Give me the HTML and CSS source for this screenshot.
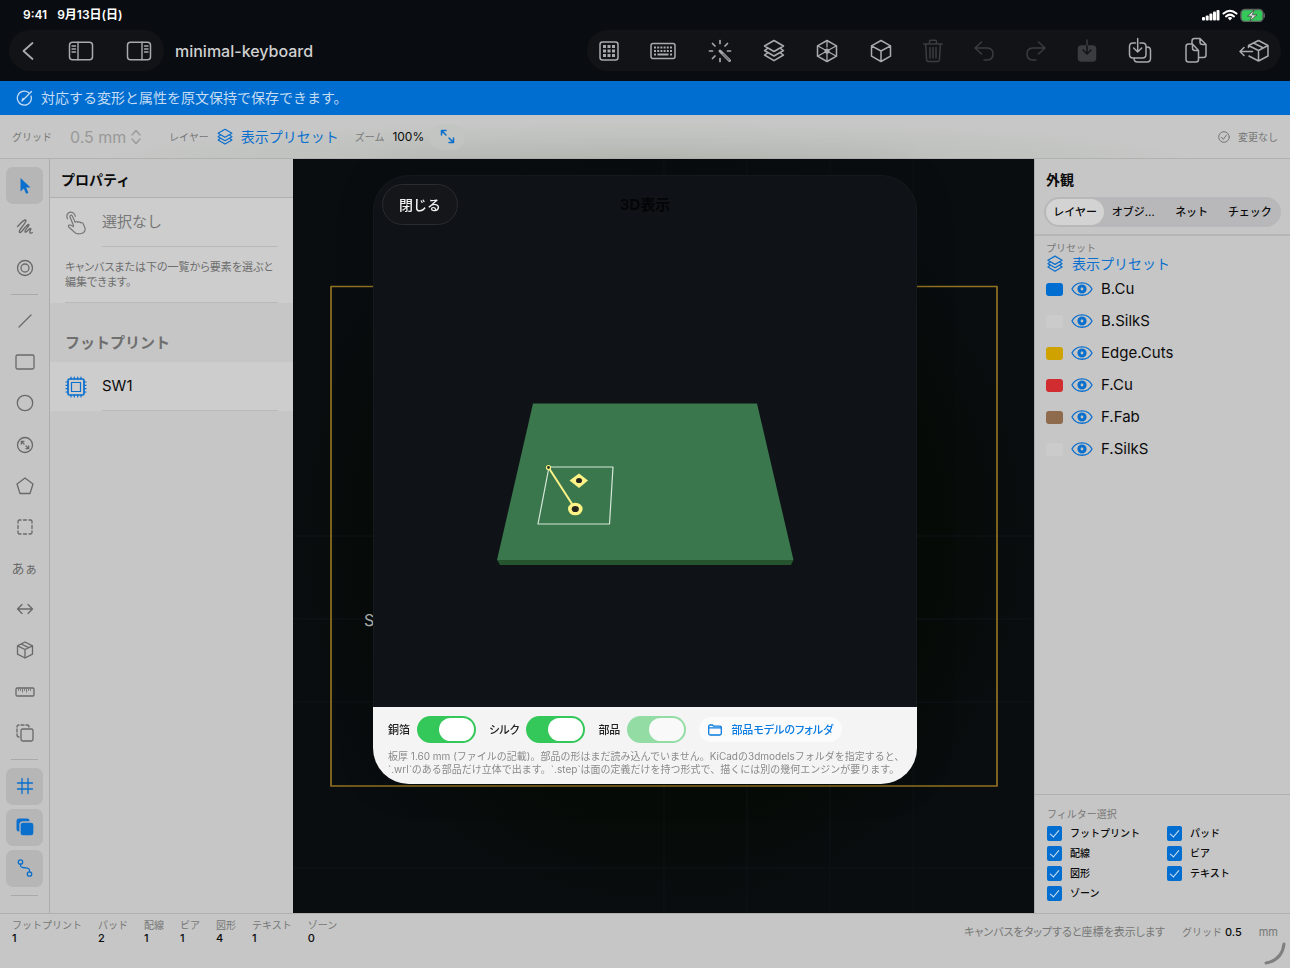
FILE: index.html
```html
<!DOCTYPE html>
<html lang="ja">
<head>
<meta charset="utf-8">
<meta name="viewport" content="width=device-width, initial-scale=1">
<title>minimal-keyboard</title>
<link rel="stylesheet" href="styles.css">
</head>
<body>
<svg class="defs" aria-hidden="true">
  <symbol id="layers" viewBox="0 0 22 24"><path d="M11 1.500 20.500 7 11 12.500 1.500 7ZM4.300 9.600 1.500 11.500 11 17l9.500-5.500-2.800-1.900M4.300 14.100 1.500 16 11 21.700 20.500 16l-2.800-1.900"/></symbol>
  <symbol id="eye" viewBox="0 0 22 16"><path d="M1 8C5-.3 17-.3 21 8 17 16.300 5 16.300 1 8Z"/><circle cx="11" cy="8" r="3" stroke-width="3.200"/></symbol>
</svg>

<header class="top">
  <div class="status">
    <span>9:41</span><span>9月13日(日)</span>
    <svg class="status-icons" width="64" height="14" viewBox="0 0 64 14" aria-hidden="true">
      <g fill="#fff"><rect x="1" y="9" width="3" height="3.500" rx="1"/><rect x="4.700" y="7.500" width="3" height="5" rx="1"/><rect x="8.400" y="5.500" width="3" height="7" rx="1"/><rect x="12" y="3.500" width="3" height="9" rx="1"/><rect x="15.500" y="2" width="3" height="10.500" rx="1"/></g>
      <g fill="none" stroke="#fff" stroke-width="2"><path d="M22.500 5.600q6.500-5.600 13 0M25 8.400q4-3.600 8 0"/></g><path d="M26.700 10q2.300-1.800 4.600 0L29 12.500Z" fill="#fff"/>
      <rect x="40" y="1.500" width="22" height="12" rx="4" fill="#34c759" stroke="#5d6460" stroke-width="1.500"/><path d="M63.500 6v3" stroke="#5d6460"/><path d="m53 2-6.500 6.200h4L49 13l7-6.200h-4.300Z" fill="#ddd" stroke="#3c4a40" stroke-width=".8"/>
    </svg>
  </div>
  <nav class="nav">
    <div class="pill pill-left">
      <button aria-label="戻る"><svg width="14" height="22" viewBox="0 0 14 22"><path d="m11.500 3-9 8 9 8" stroke-width="1.800"/></svg></button>
      <button aria-label="左パネル"><svg width="26" height="22" viewBox="0 0 26 22"><rect x="1.500" y="2.200" width="23" height="17.600" rx="3"/><path d="M10 2.200v17.600M4 6h3.500M4 9h3.500M4 12h3.500" stroke-width="1.400"/></svg></button>
      <button aria-label="右パネル"><svg width="26" height="22" viewBox="0 0 26 22"><rect x="1.500" y="2.200" width="23" height="17.600" rx="3"/><path d="M16 2.200v17.600M18.500 6H22M18.500 9H22M18.500 12H22" stroke-width="1.400"/></svg></button>
    </div>
    <h1>minimal-keyboard</h1>
    <div class="pill pill-right">
      <button aria-label="グリッド表"><svg width="20" height="20" viewBox="0 0 20 20"><rect x="1" y="1" width="18" height="18" rx="2.500"/><path d="M4 5.500h3m1.500 0h3m1.500 0h3M4 10h3m1.500 0h3m1.500 0h3M4 14.500h3m1.500 0h3m1.500 0h3" stroke-width="3" stroke-linecap="butt"/></svg></button>
      <button aria-label="キーボード"><svg width="26" height="18" viewBox="0 0 26 18"><rect x="1" y="1.500" width="24" height="15" rx="2"/><g stroke-linecap="butt"><path d="M4 5.500h18M4 9h18" stroke-width="2" stroke-dasharray="2 1.200"/><path d="M4 12.500h2m1.500 0h11m1.500 0h2" stroke-width="1.800"/></g></svg></button>
      <button aria-label="自動"><svg width="24" height="24" viewBox="0 0 24 24"><path d="M12 1.500v3M12 19.500v3M1.500 12h3M19.500 12h3M4.500 4.500l2.500 2.500M19.500 4.500l-2.500 2.500M4.500 19.500l2.500-2.500" stroke-width="1.700"/><path d="m12 12 9.500 9.500" stroke-width="3"/><path d="m15 15 6 6" stroke="#66676b" stroke-width="1.300"/></svg></button>
      <button aria-label="レイヤー"><svg width="22" height="24"><use href="#layers"/></svg></button>
      <button aria-label="ワイヤー表示"><svg width="22" height="24" viewBox="0 0 22 24"><path d="m11 1.500 9.500 5.300v10.400L11 22.500l-9.500-5.300V6.800Z"/><path d="M11 12v10M11 12 2 7M11 12l9-5M11 8V2M11 12l-9 5M11 12l9 5" stroke-width="1.300"/><circle cx="11" cy="12" r="1.800"/></svg></button>
      <button aria-label="3D表示"><svg width="22" height="24" viewBox="0 0 22 24"><path d="m11 1.500 9.500 5.300v10.400L11 22.500l-9.500-5.300V6.800ZM1.500 6.800 11 12l9.500-5.200M11 12v10.500"/></svg></button>
      <button aria-label="削除" disabled><svg width="20" height="24" viewBox="0 0 20 24"><path d="M.8 5h18.400M6.500 5V2.500q0-1.200 1.200-1.200h4.600q1.200 0 1.200 1.200V5M2.700 5l.8 15.500q.1 2 2 2h9q1.900 0 2-2L17.300 5M7 8.500v10.500M10 8.500v10.500M13 8.500v10.500"/></svg></button>
      <button aria-label="取り消す" disabled><svg width="20" height="22" viewBox="0 0 20 22"><path d="M7.500 2 1 8l6.500 6M1 8h12.500q5.500.4 5.500 6t-5.500 6H10"/></svg></button>
      <button aria-label="やり直す" disabled><svg width="20" height="22" viewBox="0 0 20 22"><path d="M12.500 2 19 8l-6.500 6M19 8H6.500Q1 8.400 1 14t5.500 6H10"/></svg></button>
      <button aria-label="保存" disabled><svg width="20" height="24" viewBox="0 0 20 24"><rect x="1.500" y="7" width="17" height="15" rx="3" fill="currentColor"/><path d="M10 1v6"/><path d="M10 7v8m-4-4 4 4 4-4" stroke="#121317"/></svg></button>
      <button aria-label="書き出す"><svg width="24" height="28" viewBox="0 0 24 28"><path d="M7.500 6H5Q1.500 6 1.500 9.500v8Q1.500 21 5 21h9.500q3.500 0 3.500-3.500v-8Q18 6 14.500 6H12M9.700 1.500V15m-4-4 4 4 4-4M18 10h1q3.500 0 3.500 3.500v8q0 3.500-3.500 3.500H9.500Q6 25 6 21.500V21"/></svg></button>
      <button aria-label="複製"><svg width="24" height="28" viewBox="0 0 24 28"><path d="M4.500 7h4l6 6.500v9q0 2.500-2.500 2.500H4.500Q2 25 2 22.500v-13Q2 7 4.500 7ZM8.500 7v4q0 2.500 2.500 2.500h3.500M8 6.500V4q0-2.500 2.500-2.500h5.500l6 6V18q0 2.500-2.500 2.500h-4.500M16 1.500V5q0 2.500 2.500 2.500H22"/></svg></button>
      <button aria-label="部品を配置"><svg width="30" height="26" viewBox="0 0 30 26"><path d="M9.500 9.500V7.500L19.500 2.500l9.500 5v10.500l-9.500 5-9.500-5M9.500 7.500l10 5 9.500-5M19.500 12.500V23M14.500 5l10 5M1 13.500h12.500M5 9.500l-4 4 4 4"/></svg></button>
    </div>
  </nav>
</header>

<p class="banner"><svg width="17" height="17" viewBox="0 0 17 17" aria-hidden="true"><path d="M12.500 2.500a7 7 0 1 0 2.500 3.500M6 11 15.500 1.500M6 11l1-2.700"/></svg>対応する変形と属性を原文保持で保存できます。</p>

<section class="options">
  <label class="muted" for="grid">グリッド</label>
  <span class="select"><select id="grid" disabled><option>0.5 mm</option></select><svg width="10" height="16" viewBox="0 0 10 16" aria-hidden="true"><path d="m1 6 4-4.500L9 6M1 10l4 4.500L9 10"/></svg></span>
  <span class="muted">レイヤー</span>
  <button class="preset"><svg width="16" height="18"><use href="#layers"/></svg>表示プリセット</button>
  <span class="muted">ズーム</span><output class="zoom">100%</output>
  <button class="fit" aria-label="全体表示"><svg width="15" height="15" viewBox="0 0 15 15"><path d="m1.500 1.500 4.500 4.500M1.500 6V1.500H6M13.500 13.500 9 9M13.500 9v4.500H9"/></svg></button>
  <span class="muted saved"><svg width="12" height="12" viewBox="0 0 12 12" aria-hidden="true"><circle cx="6" cy="6" r="5.300"/><path d="m3.500 6.300 1.800 2L8.500 4"/></svg>変更なし</span>
</section>

<main class="work">
  <div class="rail">
    <button class="on" aria-label="選択"><svg width="20" height="20" viewBox="0 0 20 20"><path d="M5.500 2v13.500L8.800 12.500l2.300 5.300 2.300-1-2.300-5.200h4.400Z" fill="currentColor" stroke="none"/></svg></button>
    <button aria-label="なげなわ"><svg width="20" height="20" viewBox="0 0 20 20"><path d="M2.500 9.500C5 7 8 3.500 10 3c2.500-.2-.5 4-3 7s-3.500 5.500-2 5.500c2 0 6-7.500 8.500-8 2 .3-4.500 6-3.500 7.500 1.200 1 3.800-3.500 5.500-3.500 1.500.3-2 3-.5 4.500.8.600 1.500 0 2.300-.5"/></svg></button>
    <button aria-label="ビア"><svg width="20" height="20" viewBox="0 0 20 20"><circle cx="10" cy="10" r="7.500"/><circle cx="10" cy="10" r="4"/></svg></button>
    <hr>
    <button aria-label="線"><svg width="20" height="20" viewBox="0 0 20 20"><path d="M4 16 16 4"/></svg></button>
    <button aria-label="長方形"><svg width="20" height="20" viewBox="0 0 20 20"><rect x="1" y="3" width="18" height="14" rx="1.500"/></svg></button>
    <button aria-label="円"><svg width="20" height="20" viewBox="0 0 20 20"><circle cx="10" cy="10" r="7.700"/></svg></button>
    <button aria-label="円弧"><svg width="20" height="20" viewBox="0 0 20 20"><circle cx="10" cy="10" r="7.500"/><path d="m6.500 6.500 2.500 2.500M6.300 9V6.300H9M13.500 13.500l-2.500-2.500M13.700 11v2.700H11"/></svg></button>
    <button aria-label="多角形"><svg width="20" height="20" viewBox="0 0 20 20"><path d="m10 2 8 6-3 9.500H5L2 8Z"/></svg></button>
    <button aria-label="範囲"><svg width="20" height="20" viewBox="0 0 20 20"><path d="M3 6V4.500Q3 3 4.500 3H6M8.500 3h3M14 3h1.500Q17 3 17 4.500V6M17 8.500v3M17 14v1.500q0 1.500-1.500 1.500H14M11.500 17h-3M6 17H4.500Q3 17 3 15.500V14M3 11.500v-3"/></svg></button>
    <button class="kana" aria-label="文字">あぁ</button>
    <button aria-label="寸法"><svg width="20" height="20" viewBox="0 0 20 20"><path d="M3 10h14M7 5.500 2.500 10 7 14.500M13 5.500l4.500 4.500-4.500 4.500"/></svg></button>
    <button aria-label="フットプリント"><svg width="20" height="20" viewBox="0 0 20 20"><path d="m10 2 7.500 3.800v8.400L10 18l-7.500-3.800V5.800ZM2.500 5.800 10 9.500l7.500-3.700M10 9.500V18M6.200 4l7.500 3.700"/></svg></button>
    <button aria-label="定規"><svg width="20" height="20" viewBox="0 0 20 20"><rect x="1" y="6" width="18" height="8" rx="1.200"/><path d="M3.500 7v1.500M5.500 7v1.500M7.500 7v3M9.500 7v1.500M11.500 7v3M13.500 7v1.500M15.500 7v1.500" stroke-width=".8"/></svg></button>
    <button aria-label="重ね順"><svg width="20" height="20" viewBox="0 0 20 20"><rect x="6" y="6" width="12" height="12" rx="1.800"/><path d="M4 14q-2 0-2-2v-1M2 9V6M2 4q0-2 2-2M6 2h3M11 2h1q2 0 2 2"/></svg></button>
    <hr>
    <button class="on" aria-label="グリッド表示"><svg width="20" height="20" viewBox="0 0 20 20"><path d="M2.500 7h15M2.500 13h15M7 2.500v15M13 2.500v15"/></svg></button>
    <button class="on" aria-label="塗りつぶし"><svg width="20" height="20" viewBox="0 0 20 20"><rect x="1.500" y="1.500" width="13" height="13" rx="2.500" fill="currentColor" stroke="none"/><rect x="5" y="5" width="14" height="14" rx="3" fill="currentColor" stroke="#b7b7b7"/></svg></button>
    <button class="on" aria-label="配線"><svg width="20" height="20" viewBox="0 0 20 20"><circle cx="5.500" cy="4" r="2.200"/><circle cx="14.500" cy="16" r="2.200"/><path d="M5.500 6.200v1q0 2 2 2.300l5 .7q2 .3 2 2.300v1.300"/></svg></button>
    <hr>
  </div>

  <aside class="props">
    <h2>プロパティ</h2>
    <div class="list">
      <div class="item muted"><svg width="22" height="24" viewBox="0 0 22 24" aria-hidden="true"><path d="M8.500 14.500 5 6c-.7-1.700 1.500-2.700 2.300-1l3 6.500c.3-1.200 2.200-1.400 2.700 0 .6-1 2.200-.9 2.700.4.900-.7 2.200-.2 2.600 1l1.500 3.600c1 3-.6 5.200-3.300 6-3.300 1-5.800.2-7.500-1.700L3.700 16c-1-1.400.9-2.900 2.300-1.800l2.500 1.600M2.500 7.800C.3 3 4.500-.2 8 1.700c1.500.8 2.200 2.200 2.300 3.600"/></svg><span>選択なし</span></div>
      <p class="help tight">キャンバスまたは下の一覧から要素を選ぶと編集できます。</p>
    </div>
    <h3>フットプリント</h3>
    <div class="list">
      <button class="item"><svg class="blue" width="22" height="22" viewBox="0 0 22 22" aria-hidden="true"><rect x="3" y="3" width="16" height="16" rx="1.500" stroke-width="1.700"/><rect x="6.500" y="6.500" width="9" height="9"/><path d="M6 3V1M9.300 3V1M12.700 3V1M16 3V1M6 21v-2M9.300 21v-2M12.700 21v-2M16 21v-2M3 6H1M3 9.300H1M3 12.700H1M3 16H1M21 6h-2M21 9.300h-2M21 12.700h-2M21 16h-2"/></svg><span>SW1</span></button>
    </div>
  </aside>

  <div class="canvas">
    <svg class="drawing" viewBox="0 0 741 754" preserveAspectRatio="xMidYMid slice" aria-hidden="true">
      <path d="M0 377h741M0 460h741M0 543h741M0 709h741M371 0v754M454 0v754M537 0v754M620 0v754" stroke="#0d1214" fill="none"/>
      <rect x="38" y="127.500" width="666" height="499.500" fill="none" stroke="#927220" stroke-width="1.700"/>
      <text x="71" y="467" fill="#b5b5b5" font-size="16">SW1</text>
    </svg>
  </div>

  <aside class="looks">
    <div class="looks-head">
      <h2>外観</h2>
      <div class="tabs" role="tablist">
        <button role="tab" aria-selected="true">レイヤー</button><button role="tab">オブジ…</button><button role="tab">ネット</button><button role="tab">チェック</button>
      </div>
    </div>
    <div class="layers">
      <p class="muted">プリセット</p>
      <button class="preset"><svg width="18" height="18"><use href="#layers"/></svg>表示プリセット</button>
      <ul>
        <li><i class="sw bcu"></i><button aria-label="B.Cuの表示"><svg width="22" height="16"><use href="#eye"/></svg></button>B.Cu</li>
        <li><i class="sw silk"></i><button aria-label="B.SilkSの表示"><svg width="22" height="16"><use href="#eye"/></svg></button>B.SilkS</li>
        <li><i class="sw edge"></i><button aria-label="Edge.Cutsの表示"><svg width="22" height="16"><use href="#eye"/></svg></button>Edge.Cuts</li>
        <li><i class="sw fcu"></i><button aria-label="F.Cuの表示"><svg width="22" height="16"><use href="#eye"/></svg></button>F.Cu</li>
        <li><i class="sw fab"></i><button aria-label="F.Fabの表示"><svg width="22" height="16"><use href="#eye"/></svg></button>F.Fab</li>
        <li><i class="sw silk"></i><button aria-label="F.SilkSの表示"><svg width="22" height="16"><use href="#eye"/></svg></button>F.SilkS</li>
      </ul>
    </div>
    <fieldset class="filter">
      <legend class="muted">フィルター選択</legend>
      <div class="checks">
        <label><input type="checkbox" checked>フットプリント</label><label><input type="checkbox" checked>パッド</label>
        <label><input type="checkbox" checked>配線</label><label><input type="checkbox" checked>ビア</label>
        <label><input type="checkbox" checked>図形</label><label><input type="checkbox" checked>テキスト</label>
        <label><input type="checkbox" checked>ゾーン</label>
      </div>
    </fieldset>
  </aside>
</main>

<footer class="foot">
  <dl>
    <div><dt>フットプリント</dt><dd>1</dd></div>
    <div><dt>パッド</dt><dd>2</dd></div>
    <div><dt>配線</dt><dd>1</dd></div>
    <div><dt>ビア</dt><dd>1</dd></div>
    <div><dt>図形</dt><dd>4</dd></div>
    <div><dt>テキスト</dt><dd>1</dd></div>
    <div><dt>ゾーン</dt><dd>0</dd></div>
  </dl>
  <p class="hint tight">キャンバスをタップすると座標を表示します</p>
  <p class="unit muted"><span>グリッド <b>0.5</b></span><span class="mm">mm</span></p>
  <svg class="grip" width="24" height="24" viewBox="0 0 24 24" aria-hidden="true"><path d="M21 2Q19 18 3 21"/></svg>
</footer>

<div class="overlay">
  <div class="dialog" role="dialog" aria-labelledby="dialog-title">
    <div class="dialog-head"><button class="close">閉じる</button><h2 id="dialog-title">3D表示</h2></div>
    <svg class="board" viewBox="0 0 544 473" aria-hidden="true">
      <path d="M124 326 160 169.500H384L420.500 326Z" fill="#3b774d"/>
      <path d="M124 326H420.500L418 331H127Z" fill="#25542f"/>
      <path d="M176 233H240L236.500 290H165Z" fill="none" stroke="#d5e8d8" stroke-width="1.200"/>
      <path d="m175.500 233.500 26.500 41" stroke="#fbf387" stroke-width="2"/>
      <circle cx="175.500" cy="233.500" r="2" fill="#24311e" stroke="#fbf387" stroke-width="1.200"/>
      <path d="m206 239.500 9 7-9 7.500-9.500-7.500Z" fill="#fdf386"/><ellipse cx="206" cy="246.500" rx="3" ry="2.600" fill="#26261f"/>
      <ellipse cx="202.300" cy="275" rx="7.300" ry="6.300" fill="#fdf386"/><ellipse cx="202.300" cy="275" rx="3.600" ry="3.100" fill="#26261f"/>
    </svg>
    <div class="dialog-foot">
      <div class="switches tight">
        <label>銅箔<input type="checkbox" role="switch" checked></label>
        <label>シルク<input type="checkbox" role="switch" checked></label>
        <label>部品<input type="checkbox" role="switch" checked disabled></label>
        <button class="folder"><svg width="14" height="12" viewBox="0 0 14 12" aria-hidden="true"><path d="M.7 3.900h12.600M.7 9.500v-7q0-1.500 1.500-1.500h2.300l1.200 1.200h6.200q1.400 0 1.400 1.400v6q0 1.400-1.400 1.400H2.100Q.7 11 .7 9.500Z"/></svg>部品モデルのフォルダ</button>
      </div>
      <p>板厚 1.60 mm (ファイルの記載)。部品の形はまだ読み込んでいません。KiCadの3dmodelsフォルダを指定すると、<br>`.wrl`のある部品だけ立体で出ます。`.step`は面の定義だけを持つ形式で、描くには別の幾何エンジンが要ります。</p>
    </div>
  </div>
</div>
</body>
</html>
```
FILE: styles.css
```css
* { box-sizing: border-box; margin: 0; padding: 0; }
body {
  display: flex; flex-direction: column; min-height: 100vh;
  background: #c6c6c6; color: #0b0b0b;
  font-family: Inter, "Noto Sans CJK JP", sans-serif; font-size: 11px; line-height: 14px;
}
button, input, select { font: inherit; font-feature-settings: inherit; color: inherit; background: none; border: 0; }
button { display: flex; align-items: center; white-space: nowrap; }
svg { display: block; flex: none; fill: none; stroke: currentColor; stroke-width: 1.3; stroke-linecap: round; stroke-linejoin: round; }
.defs { position: absolute; width: 0; height: 0; }
.status-icons, .board, .drawing { stroke: none; }
.tight { font-feature-settings: "palt"; }
.muted { color: #777; font-size: 10px; }
.blue { color: #0a6fcd; }

.top { background: #090c10; color: #a9aaac; }
.status { display: flex; align-items: center; gap: 10px; height: 30px; padding: 0 25px 0 23px; color: #fff; font-size: 12px; font-weight: 600; }
.status-icons { margin-left: auto; }
.nav { display: flex; align-items: center; height: 51px; padding: 0 9px 10px; }
.pill { display: flex; align-items: center; justify-content: space-between; height: 41px; border-radius: 21px; background: #121317; }
.pill svg { stroke-width: 1.5; }
.pill button:disabled { color: #3b3c3f; }
.pill-left { width: 155px; padding: 0 12px; }
.pill-right { flex: 0 1 694px; margin-left: auto; padding: 0 12px; }
h1 { margin-left: 11px; color: #d0d0d1; font-size: 16px; line-height: 20px; font-weight: 500; }

.banner { display: flex; align-items: center; gap: 8px; height: 34px; padding: 0 16px; background: #006dd0; color: #c5dcf3; font-size: 14px; }
.options { display: flex; align-items: center; height: 44px; padding: 0 12px; background: radial-gradient(ellipse at 50% 100%, #b7bbb5, #c6c7c6 60%); border-bottom: 1px solid #b0b1b0; }
.select { display: flex; align-items: center; gap: 4px; margin: 0 28px 0 18px; color: #999; }
.select select { appearance: none; font-size: 16px; line-height: 20px; opacity: 1; }
.preset { gap: 8px; color: #0a6fcd; font-size: 14px; line-height: 18px; }
.preset svg { stroke-width: 1.6; }
.options .preset { margin: 0 16px 0 8px; }
.zoom { margin: 0 5px 0 8px; font-size: 12px; }
.fit { justify-content: center; width: 36px; height: 26px; border-radius: 13px; background: #c3c5c2; color: #0a6fcd; }
.fit svg { stroke-width: 1.5; }
.saved { display: flex; align-items: center; gap: 8px; margin-left: auto; }
.saved svg { stroke-width: 1; }

.work { display: flex; flex: 1; }
.rail { display: flex; flex-direction: column; align-items: center; justify-content: space-between; width: 50px; padding: 8px 0 14px; background: #c5c5c5; border-right: 1px solid #adadad; color: #696969; }
.rail button { justify-content: center; width: 37px; height: 37px; border-radius: 7px; }
.rail .on { background: #b6b6b6; color: #0a6fcd; }
.rail .kana { font-size: 13px; }
.rail hr { width: 27px; height: 1px; margin: 4px 0 3px; border: 0; background: #a9a9a9; }

.props { width: 243px; }
h2 { font-size: 14px; line-height: 20px; font-weight: 700; }
.props h2 { padding: 11px 11px 7px; border-bottom: 1px solid #b0b0b0; }
.list { background: #cdcdcd; }
.item { display: flex; align-items: center; gap: 15px; width: 100%; padding: 0 15px; font-size: 15px; text-align: left; }
.item svg { stroke-width: 1.2; }
.item span { flex: 1; padding: 14px 0; line-height: 20px; border-bottom: 1px solid #b9b9b9; }
.help { margin: 0 15px; padding: 13px 0 12px; color: #6d6d6d; line-height: 15px; border-bottom: 1px solid #b9b9b9; }
h3 { padding: 30px 15px 9px; color: #6f6f6f; font-size: 15px; line-height: 20px; font-weight: 600; }

.canvas { position: relative; flex: 1; overflow: hidden; background: radial-gradient(ellipse at center, #060b07 50%, #090d10 75%); }
.drawing { position: absolute; inset: 0; width: 100%; height: 100%; }

.looks { display: flex; flex-direction: column; width: 256px; border-left: 1px solid #adadad; }
.looks-head { padding: 11px 9px 7px; border-bottom: 2px solid #b6b6b6; }
.looks h2 { padding: 0 2px; }
.tabs { display: flex; height: 30px; margin-top: 7px; padding: 2px; border-radius: 15px; background: #b8b8ba; }
.tabs button { flex: 1; justify-content: center; border-radius: 13px; font-weight: 500; }
.tabs [aria-selected] { background: #d3d3d3; }
.layers { flex: 1; padding: 5px 11px; }
.layers li { display: flex; align-items: center; gap: 8px; height: 32px; font-size: 15px; list-style: none; }
.layers li button { color: #0a6fcd; }
.sw { width: 17px; height: 13px; border-radius: 3px; }
.bcu { background: #006dd0; }
.silk { background: #cbcbcb; }
.edge { background: #cfa200; }
.fcu { background: #d12d31; }
.fab { background: #8f6b4e; }
.filter { padding: 12px 12px 10px; border: 0; border-top: 1px solid #b0b0b0; }
.filter legend { float: left; width: 100%; }
.checks { display: grid; grid-template-columns: 120px 1fr; clear: both; padding-top: 2px; font-size: 10px; }
.checks label { display: flex; align-items: center; gap: 8px; height: 20px; font-weight: 500; }
.checks input { position: relative; appearance: none; width: 15px; height: 15px; border-radius: 2px; background: #006dd0; }
.checks input:checked::after { content: ""; position: absolute; left: 5px; top: 2px; width: 4px; height: 8px; border: solid #d3e4f4; border-width: 0 1px 1px 0; transform: rotate(40deg); }

.foot { position: relative; display: flex; align-items: flex-start; height: 55px; padding: 5px 12px; border-top: 1px solid #b0b0b0; background: #c5c6c5; }
.foot dl { display: flex; gap: 16px; font-size: 10px; line-height: 13px; }
.foot dt { color: #777; }
.foot dd { font-size: 11px; font-weight: 500; }
.foot p { padding-top: 6px; }
.hint { margin-left: auto; color: #777; }
.unit { display: flex; gap: 17px; margin-left: 17px; }
.unit b { color: #0b0b0b; font-size: 11px; font-weight: 500; }
.mm { font-size: 11px; }
.grip { position: absolute; right: 3px; bottom: 2px; color: #808080; stroke-width: 3; }

.overlay { position: fixed; inset: 0; display: flex; align-items: center; justify-content: center; padding-bottom: 9px; }
.dialog { width: 544px; max-width: 100%; overflow: hidden; border-radius: 36px; background: #0f1217; box-shadow: inset 0 0 0 1px #15191d, 0 0 40px #00000022; }
.dialog-head { display: grid; grid-template-columns: 1fr auto 1fr; align-items: center; padding: 9px; color: #040506; }
.dialog-head h2 { font-size: 15px; }
.close { justify-self: start; height: 41px; padding: 0 16px; border: 1px solid #292c30; border-radius: 21px; background: #15161a; color: #f2f2f2; font-size: 14px; font-weight: 500; }
.board { width: 100%; height: auto; }
.dialog-foot { padding: 9px 15px 8px; background: #f4f4f4; color: #222; }
.switches { display: flex; align-items: center; gap: 13px; height: 27px; }
.switches label { display: flex; align-items: center; gap: 7px; font-weight: 500; }
.switches input { display: flex; appearance: none; width: 59px; height: 27px; padding: 2px; border-radius: 14px; background: #34c759; }
.switches input::after { content: ""; width: 35px; margin-left: auto; border-radius: 12px; background: #fff; }
.switches input:disabled { opacity: .5; }
.folder { gap: 9px; height: 25px; padding: 0 9px; border-radius: 13px; background: #fbfbfb; color: #0a7be0; font-weight: 500; }
.dialog-foot p { margin-top: 7px; color: #8a8a8a; font-size: 10px; line-height: 13px; white-space: nowrap; }
```
